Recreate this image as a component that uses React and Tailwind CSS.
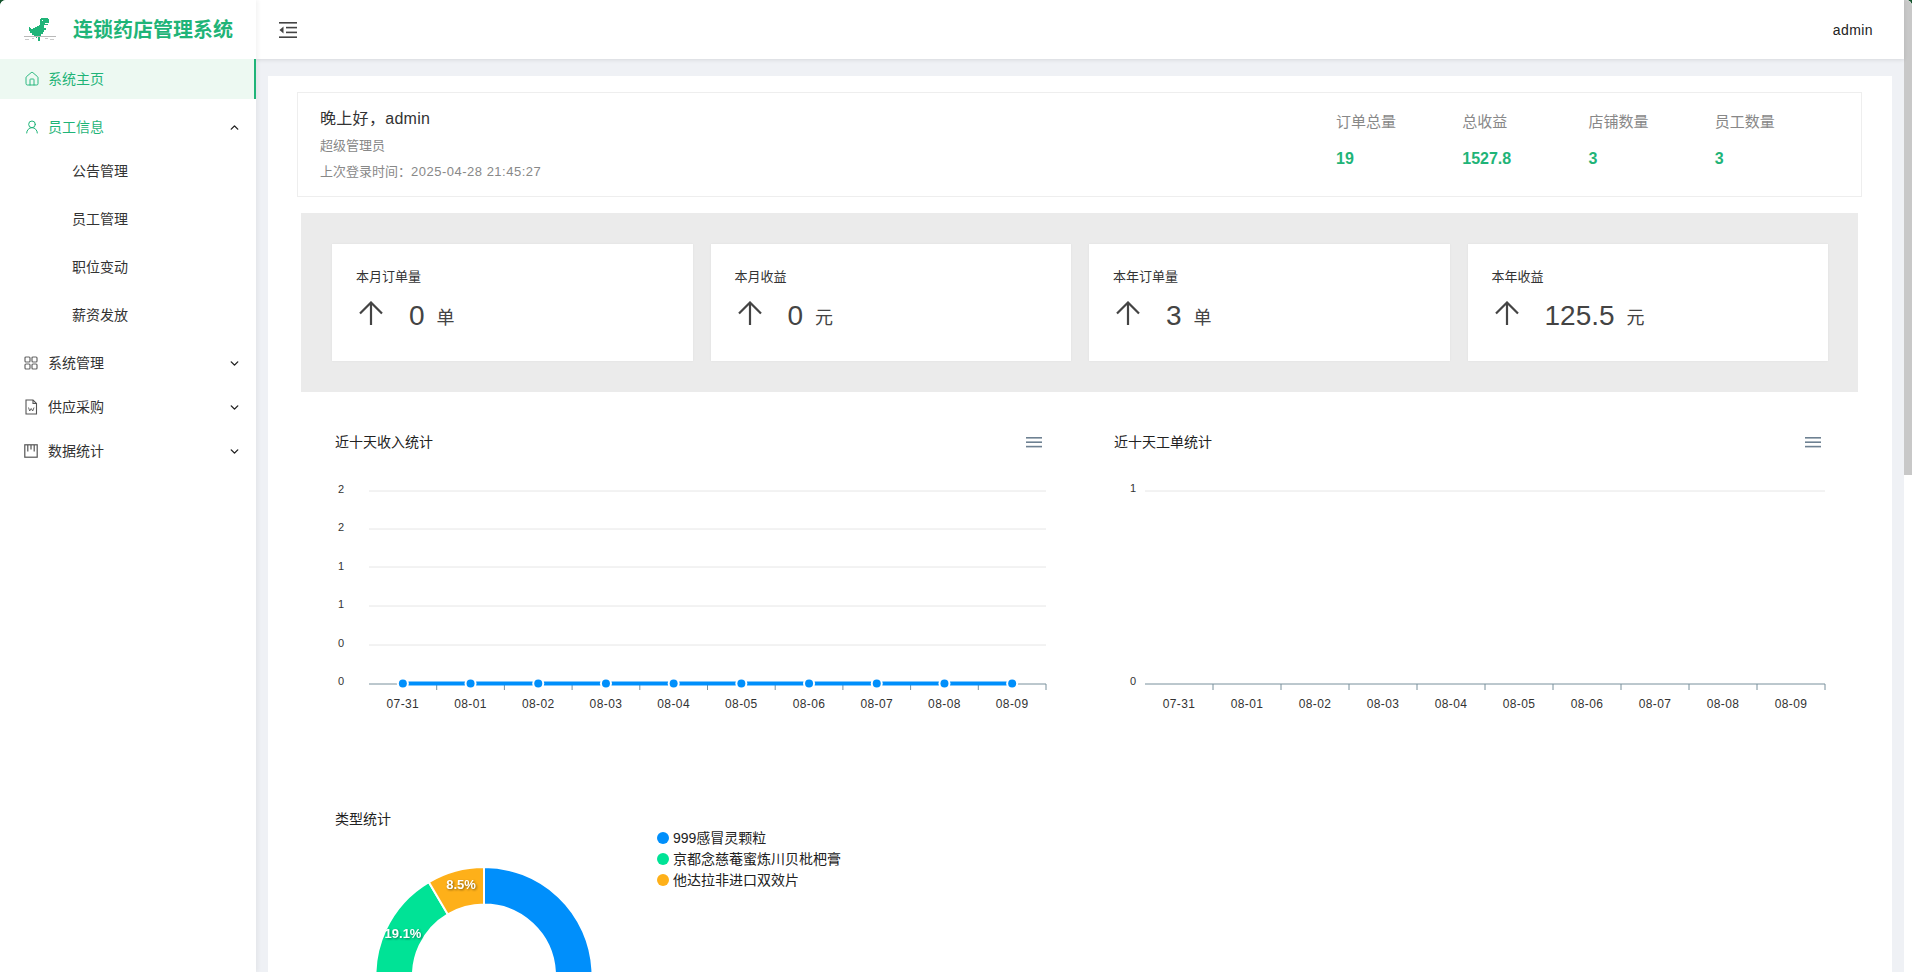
import { ChevronDown, ChevronUp, House, UserRound } from "lucide-react";

const days = ["07-31", "08-01", "08-02", "08-03", "08-04", "08-05", "08-06", "08-07", "08-08", "08-09"];

const topStats = [
  { label: "订单总量", value: "19" },
  { label: "总收益", value: "1527.8" },
  { label: "店铺数量", value: "3" },
  { label: "员工数量", value: "3" },
];

const cards = [
  { label: "本月订单量", value: "0", unit: "单" },
  { label: "本月收益", value: "0", unit: "元" },
  { label: "本年订单量", value: "3", unit: "单" },
  { label: "本年收益", value: "125.5", unit: "元" },
];

const legend = [
  { name: "999感冒灵颗粒", dot: "bg-[#008ffb]" },
  { name: "京都念慈菴蜜炼川贝枇杷膏", dot: "bg-[#00e396]" },
  { name: "他达拉非进口双效片", dot: "bg-[#feb019]" },
];

function DinoLogo() {
  return (
    <svg width="32" height="24" viewBox="0 0 32 24" className="shrink-0">
      <path
        fill="#1fb478"
        d="M17 0H24V1H25V5H21V6H24V7H20V10H22V12H20V14H19V16H17V18H16V23H14V18H13V20H12V18H10V17H8V15H6V13H5V9H6V10H7V11H9V10H11V9H13V8H15V7H16V1H17Z"
      />
      <rect x="18" y="2" width="1" height="1" fill="#fff" />
      <rect x="0" y="18" width="32" height="1" fill="#b9b9b9" />
      <path fill="#c9c9c9" d="M1 21H5V22H1ZM8 20H10V21H8ZM21 20H24V21H21ZM26 21H30V22H26Z" />
    </svg>
  );
}

function FoldIcon() {
  return (
    <svg width="18" height="16" viewBox="0 0 18 16" fill="#444">
      <rect x="0" y="0" width="18" height="1.6" />
      <rect x="7" y="4.8" width="11" height="1.6" />
      <rect x="7" y="9.6" width="11" height="1.6" />
      <rect x="0" y="14.4" width="18" height="1.6" />
      <path d="M4.5 4.6V11.4L0.5 8Z" />
    </svg>
  );
}

function GridIcon() {
  return (
    <svg width="14" height="14" viewBox="0 0 14 14" fill="none" stroke="#666" strokeWidth="1.2">
      <rect x="1" y="1" width="5" height="5" rx="1" />
      <rect x="8" y="1" width="5" height="5" rx="1" />
      <rect x="1" y="8" width="5" height="5" rx="1" />
      <rect x="8" y="8" width="5" height="5" rx="1" />
    </svg>
  );
}

function DocIcon() {
  return (
    <svg width="14" height="16" viewBox="0 0 14 16" fill="none" stroke="#555" strokeWidth="1.1">
      <path d="M2 1H9L12.5 4.5V15H2Z" />
      <path d="M9 1V4.5H12.5" />
      <path d="M4.5 8.5L5.7 12L7.2 9.5L8.7 12L10 8.5" strokeWidth="0.9" />
    </svg>
  );
}

function BoardIcon() {
  return (
    <svg width="14" height="14" viewBox="0 0 14 14" fill="none" stroke="#555" strokeWidth="1.2">
      <rect x="0.8" y="0.8" width="12.4" height="12.4" />
      <path d="M3.8 1V7.5M7 1V5.5M10.2 1V7.5" />
    </svg>
  );
}

function MenuRow({ text, icon, open, active }) {
  return (
    <div className="flex h-full items-center pl-6 pr-[15px]">
      <span className="flex w-6 shrink-0 items-center">{icon}</span>
      <span className={active ? "text-[#1fb478]" : "text-[#333]"}>{text}</span>
      <span className="ml-auto text-[#222]">
        {open === true && <ChevronUp size={13} strokeWidth={2.6} />}
        {open === false && <ChevronDown size={13} strokeWidth={2.6} />}
      </span>
    </div>
  );
}

function Sidebar() {
  return (
    <aside className="relative z-20 flex w-64 shrink-0 flex-col bg-white text-sm shadow-[2px_0_4px_rgba(0,0,0,0.05)]">
      <div className="flex h-[59px] items-center pl-6">
        <DinoLogo />
        <span className="ml-[17px] text-xl font-semibold text-[#1fb478]">连锁药店管理系统</span>
      </div>
      <div className="h-10 border-r-2 border-[#1fb478] bg-[#edf9f2]">
        <MenuRow text="系统主页" active icon={<House size={16} strokeWidth={1.4} color="#1fb478" />} />
      </div>
      <div className="mt-2 h-10">
        <MenuRow text="员工信息" active open icon={<UserRound size={16} strokeWidth={1.5} color="#1fb478" />} />
      </div>
      {["公告管理", "员工管理", "职位变动", "薪资发放"].map((item) => (
        <div key={item} className="flex h-12 items-center pl-[72px] text-[#333]">
          {item}
        </div>
      ))}
      <div className="mt-0.5 h-11">
        <MenuRow text="系统管理" open={false} icon={<GridIcon />} />
      </div>
      <div className="h-11">
        <MenuRow text="供应采购" open={false} icon={<DocIcon />} />
      </div>
      <div className="h-11">
        <MenuRow text="数据统计" open={false} icon={<BoardIcon />} />
      </div>
    </aside>
  );
}

function Header() {
  return (
    <header className="relative z-10 flex h-[59px] shrink-0 items-center justify-between bg-white pl-[23px] pr-[31px] shadow-[0_1px_4px_rgba(0,0,0,0.1)]">
      <FoldIcon />
      <span className="text-sm tracking-[0.4px] text-[#222]">admin</span>
    </header>
  );
}

function Welcome() {
  return (
    <div className="flex h-[105px] items-center justify-between border border-[#eeeeee] pl-[22px] pr-5">
      <div>
        <p className="-mt-px text-base leading-6 tracking-[0.3px] text-[#333]">{"晚上好\uFF0Cadmin"}</p>
        <p className="mt-[5px] text-[13px] leading-[20px] text-[#888]">超级管理员</p>
        <p className="mt-1.5 text-[13px] leading-[20px] text-[#888]">
          {"上次登录时间\uFF1A"}
          <span className="tracking-[0.5px]">2025-04-28 21:45:27</span>
        </p>
      </div>
      <div className="-mt-[9px] grid w-[505px] grid-cols-4">
        {topStats.map((s) => (
          <div key={s.label}>
            <p className="text-[15px] leading-5 text-[#888]">{s.label}</p>
            <p className="mt-[17px] text-base font-semibold leading-5 text-[#1fb478]">{s.value}</p>
          </div>
        ))}
      </div>
    </div>
  );
}

function ArrowUp() {
  return (
    <svg width="24" height="24" viewBox="0 0 24 24" fill="none" stroke="#444" strokeWidth="2.2" className="mt-3.5 shrink-0">
      <path d="M12 1V24M1 12.5L12 1.5L23 12.5" />
    </svg>
  );
}

function StatPanel() {
  return (
    <div className="mx-1 mt-4 grid h-[179px] grid-cols-4 gap-[18px] bg-[#ebebeb] py-[31px] pl-[31px] pr-[30px]">
      {cards.map((c) => (
        <div key={c.label} className="h-[117px] bg-white pl-6 pt-[23px] shadow-[0_0_2px_rgba(0,0,0,0.06)]">
          <p className="text-[13px] leading-[20px] text-[#333]">{c.label}</p>
          <div className="flex items-start pl-[3px] text-[#444]">
            <ArrowUp />
            <span className="ml-[26px] mt-[11px] text-[28px] leading-9">{c.value}</span>
            <span className="ml-3 mt-[17px] text-lg leading-7">{c.unit}</span>
          </div>
        </div>
      ))}
    </div>
  );
}

function HamburgerIcon() {
  return (
    <svg width="16" height="11" viewBox="0 0 16 11" fill="#6e8192">
      <rect y="0" width="16" height="1.6" />
      <rect y="4.4" width="16" height="1.6" />
      <rect y="8.8" width="16" height="1.6" />
    </svg>
  );
}

function LineChart({ x0, x1, yLabelX, grid, labels, points }) {
  const step = (x1 - x0) / 10;
  const axis = 230;
  return (
    <svg width="724" height="280" className="block">
      {grid.map((y) => (
        <line key={y} x1={x0} x2={x1} y1={y} y2={y} stroke="#e6e6e6" strokeWidth="1" />
      ))}
      {labels.map((l, i) => (
        <text key={i} x={yLabelX} y={l.y} textAnchor="middle" fontSize="11" fill="#333">
          {l.text}
        </text>
      ))}
      <line x1={x0} x2={x1} y1={axis} y2={axis} stroke="#78909c" strokeWidth="1" />
      {days.map((d, i) => (
        <g key={d}>
          <line x1={x0 + step * (i + 1)} x2={x0 + step * (i + 1)} y1={axis} y2={axis + 6} stroke="#78909c" strokeWidth="1" />
          <text x={x0 + step * (i + 0.5)} y={axis + 24} textAnchor="middle" fontSize="12" letterSpacing="0.4" fill="#333">
            {d}
          </text>
        </g>
      ))}
      {points && (
        <g>
          <line x1={x0 + step / 2} x2={x0 + step * 9.5} y1={axis - 0.5} y2={axis - 0.5} stroke="#008ffb" strokeWidth="4" />
          {days.map((d, i) => (
            <g key={d}>
              <circle cx={x0 + step * (i + 0.5)} cy={axis - 0.5} r="6" fill="#fff" />
              <circle cx={x0 + step * (i + 0.5)} cy={axis - 0.5} r="4" fill="#008ffb" />
            </g>
          ))}
        </g>
      )}
    </svg>
  );
}

function ChartBlock({ title, children }) {
  return (
    <div className="w-[779px] shrink-0">
      <div className="flex h-6 w-[706px] items-center justify-between text-sm text-[#222]">
        <span className="-ml-px">{title}</span>
        <HamburgerIcon />
      </div>
      {children}
    </div>
  );
}

function arc(cx, cy, r, R, from, to) {
  const pt = (rad, deg) => {
    const a = ((deg - 90) * Math.PI) / 180;
    return `${(cx + rad * Math.cos(a)).toFixed(2)} ${(cy + rad * Math.sin(a)).toFixed(2)}`;
  };
  const big = to - from > 180 ? 1 : 0;
  return `M${pt(R, from)}A${R} ${R} 0 ${big} 1 ${pt(R, to)}L${pt(r, to)}A${r} ${r} 0 ${big} 0 ${pt(r, from)}Z`;
}

function Donut() {
  const cx = 148;
  const cy = 144.5;
  return (
    <svg width="300" height="220" className="block">
      <path d={arc(cx, cy, 71, 108.5, 0, 260.6)} fill="#008ffb" stroke="#fff" strokeWidth="2" />
      <path d={arc(cx, cy, 71, 108.5, 260.6, 329.4)} fill="#00e396" stroke="#fff" strokeWidth="2" />
      <path d={arc(cx, cy, 71, 108.5, 329.4, 360)} fill="#feb019" stroke="#fff" strokeWidth="2" />
      <g fontSize="13" fontWeight="700" fill="#fff" textAnchor="middle" className="drop-shadow-[1px_1px_1px_rgba(0,0,0,0.45)]">
        <text x="125" y="58">8.5%</text>
        <text x="67" y="107">19.1%</text>
      </g>
    </svg>
  );
}

function TypeStats() {
  return (
    <div className="mt-[73px] flex pl-[39px]">
      <div className="w-[321px] shrink-0">
        <div className="-ml-px flex h-6 items-center text-sm text-[#222]">类型统计</div>
        <Donut />
      </div>
      <div className="pt-5 text-sm text-[#222]">
        {legend.map((l) => (
          <div key={l.name} className="flex h-[21px] items-center">
            <span className={`mr-1 h-3 w-3 rounded-full ${l.dot}`} />
            {l.name}
          </div>
        ))}
      </div>
    </div>
  );
}

function Charts() {
  return (
    <div className="mt-[38px] flex pl-[39px]">
      <ChartBlock title="近十天收入统计">
        <LineChart
          x0={33}
          x1={710}
          yLabelX={5}
          grid={[37, 75, 113, 152, 191]}
          labels={[
            { text: "2", y: 39 },
            { text: "2", y: 77 },
            { text: "1", y: 116 },
            { text: "1", y: 154 },
            { text: "0", y: 193 },
            { text: "0", y: 231 },
          ]}
          points
        />
      </ChartBlock>
      <ChartBlock title="近十天工单统计">
        <LineChart
          x0={30}
          x1={710}
          yLabelX={18}
          grid={[37]}
          labels={[
            { text: "1", y: 38 },
            { text: "0", y: 231 },
          ]}
        />
      </ChartBlock>
    </div>
  );
}

export default function App() {
  return (
    <div className="h-screen w-full overflow-hidden bg-[#14532d] font-[Liberation_Sans,Noto_Sans_CJK_SC,sans-serif]">
      <div className="flex h-full overflow-hidden rounded-t-md bg-white">
        <Sidebar />
        <main className="flex min-w-0 flex-1 flex-col">
          <Header />
          <div className="flex-1 overflow-hidden bg-[#eff1f5] px-3 pt-[17px]">
            <div className="min-h-full bg-white pl-[29px] pr-[30px] pt-4">
              <Welcome />
              <StatPanel />
              <Charts />
              <TypeStats />
            </div>
          </div>
        </main>
        <div className="w-2 shrink-0 bg-white">
          <div className="h-[475px] bg-[#c8c8c8]" />
        </div>
      </div>
    </div>
  );
}
